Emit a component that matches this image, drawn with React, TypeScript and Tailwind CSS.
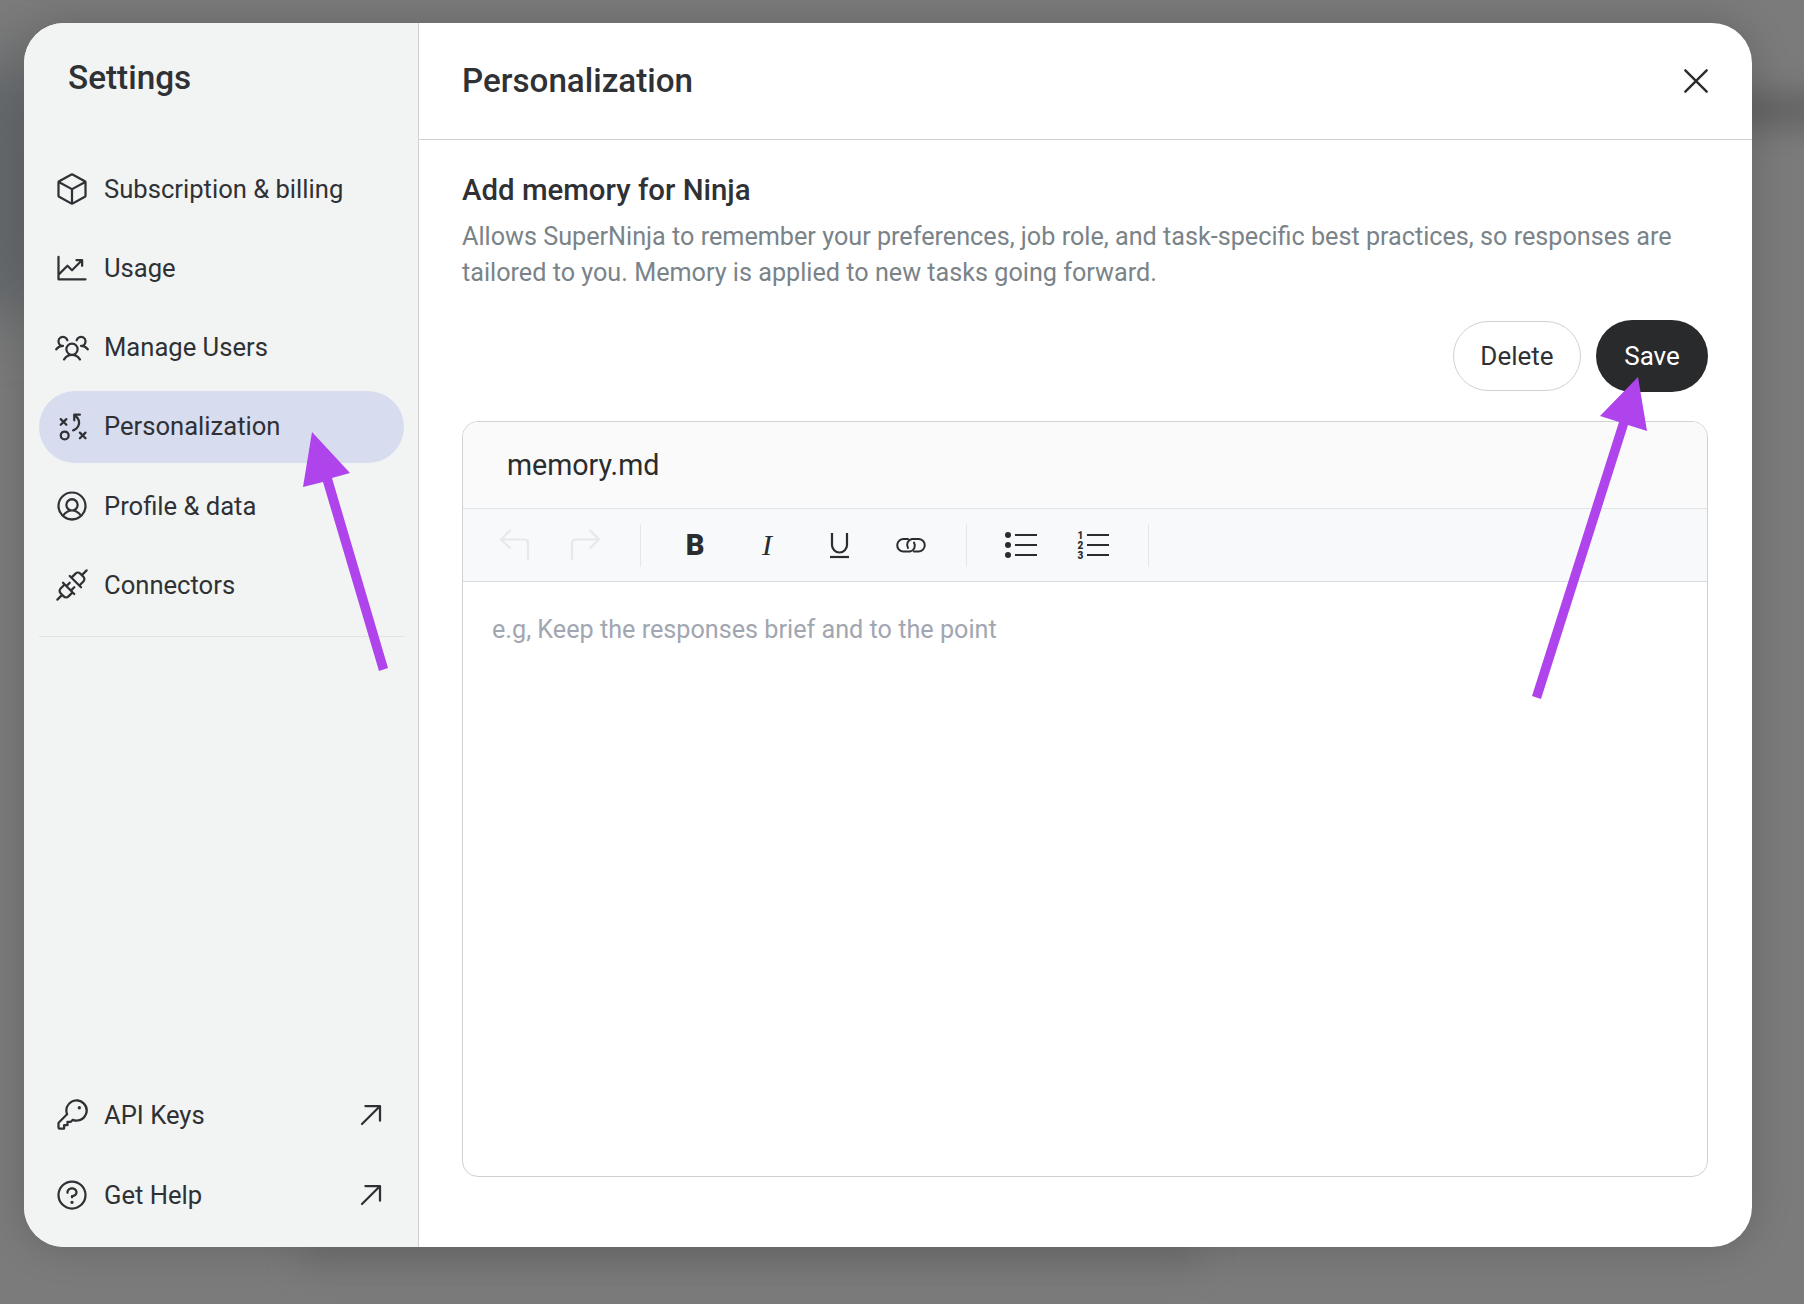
import React from "react";
import {
  PiCube, PiChartLineUp, PiUsersThree, PiStrategy, PiUserCircle, PiPlugs, PiKey, PiQuestion,
  PiArrowUpRight, PiX,
} from "react-icons/pi";

const nav = [
  { label: "Subscription & billing", Icon: PiCube },
  { label: "Usage", Icon: PiChartLineUp },
  { label: "Manage Users", Icon: PiUsersThree },
  { label: "Personalization", Icon: PiStrategy, active: true },
  { label: "Profile & data", Icon: PiUserCircle },
  { label: "Connectors", Icon: PiPlugs },
];

const Undo = ({ flip }: { flip?: boolean }) => (
  <svg width="32" height="32" viewBox="0 0 32 32" fill="none" stroke="#e6e8ea" strokeWidth="2.2" strokeLinecap="round" strokeLinejoin="round" className={flip ? "-scale-x-100" : ""}>
    <path d="M12 1.5 L3 10.5 L12 19" />
    <path d="M3 10.5 H26 Q30 10.5 30 14.5 V30" />
  </svg>
);

const Underline = () => (
  <svg width="32" height="32" viewBox="0 0 32 32" fill="none" stroke="#2b2c2e" strokeWidth="2.2">
    <path d="M9 4 V16 a7.5 7.5 0 0 0 15 0 V4" />
    <path d="M7 28 H26" />
  </svg>
);

const LinkIcon = () => (
  <svg width="32" height="32" viewBox="0 0 32 32" fill="none" stroke="#2b2c2e" strokeWidth="2" strokeLinecap="round">
    <path d="M13 10 H9 a6 6 0 0 0 -1 12.5 H15 a6 6 0 0 0 4 -9" />
    <path d="M19 22.5 H23 a6 6 0 0 0 1 -12.5 H17 a6 6 0 0 0 -4 9" />
  </svg>
);

const Bullets = () => (
  <svg width="32" height="32" viewBox="0 0 32 32" fill="#2b2c2e" stroke="none">
    <circle cx="3" cy="6" r="3" />
    <circle cx="3" cy="16" r="3" />
    <circle cx="3" cy="26" r="3" />
    <path d="M10 6 H32 M10 16 H32 M10 26 H32" stroke="#2b2c2e" strokeWidth="2" />
  </svg>
);

const Numbers = () => (
  <svg width="32" height="32" viewBox="0 0 32 32" fill="#2b2c2e">
    <text x="3.5" y="10" textAnchor="middle" fontSize="10" fontWeight="900" fontFamily="Roboto, sans-serif">1</text>
    <text x="3.5" y="20" textAnchor="middle" fontSize="10" fontWeight="900" fontFamily="Roboto, sans-serif">2</text>
    <text x="3.5" y="30" textAnchor="middle" fontSize="10" fontWeight="900" fontFamily="Roboto, sans-serif">3</text>
    <path d="M10 6 H32 M10 16 H32 M10 26 H32" stroke="#2b2c2e" strokeWidth="2" />
  </svg>
);

const TB = ({ children }: { children: React.ReactNode }) => (
  <button className="w-[72px] h-[44px] flex items-center justify-center text-[#2b2c2e]">{children}</button>
);

export default function App() {
  return (
    <div className="relative w-[1804px] h-[1304px] overflow-hidden bg-[#7b7b7b] pt-[23px] pl-[24px] font-['Roboto',sans-serif]">
      <div className="absolute left-[-40px] top-[60px] w-[80px] h-[260px] rounded-full bg-[#5f6468] blur-[30px]" />
      <div className="absolute right-[-30px] top-[95px] w-[120px] h-[30px] rounded-full bg-[#5e5e5e] blur-[16px]" />
      <div className="absolute left-[300px] top-[1240px] w-[900px] h-[24px] rounded-full bg-[#6c6c6c] blur-[16px]" />
      <div className="relative flex w-[1728px] h-[1224px] rounded-[40px] overflow-hidden bg-white shadow-[0_0_40px_rgba(0,0,0,0.18)]">
        <aside className="w-[395px] shrink-0 flex flex-col bg-[#f2f4f4] border-r border-[#cfd1d2] pl-[15px] pr-[14px] pb-[16px] text-[#2f3134]">
          <h2 className="text-[33.3px] leading-[40px] font-medium pl-[29px] pt-[35px] mb-[55px]">Settings</h2>
          <nav className="flex flex-col gap-[7.2px]">
            {nav.map(({ label, Icon, active }) => (
              <div key={label} className={`flex items-center h-[72px] pl-[15px] gap-[14px] rounded-full ${active ? "bg-[#d7dcee]" : ""}`}>
                <Icon size={36} />
                <span className="text-[25.6px]">{label}</span>
              </div>
            ))}
          </nav>
          <div className="h-px bg-[#e2e4e4] mt-[15px]" />
          <div className="mt-auto flex flex-col gap-[8px]">
            {[{ label: "API Keys", Icon: PiKey }, { label: "Get Help", Icon: PiQuestion }].map(({ label, Icon }) => (
              <div key={label} className="flex items-center h-[72px] pl-[15px] pr-[15px] gap-[14px]">
                <Icon size={36} />
                <span className="text-[25.6px] flex-1">{label}</span>
                <PiArrowUpRight size={36} />
              </div>
            ))}
          </div>
        </aside>
        <main className="flex-1 flex flex-col min-w-0">
          <header className="h-[117px] shrink-0 flex items-center justify-between pl-[43px] pr-[37px] border-b border-[#cfd1d2]">
            <h1 className="text-[33.2px] font-medium text-[#2f3134]">Personalization</h1>
            <PiX size={38} className="text-[#2b2c2e]" />
          </header>
          <div className="flex-1 flex flex-col pl-[43px] pr-[44px] pt-[32px] pb-[70px]">
            <h3 className="text-[29.4px] leading-[36px] font-medium text-[#2f3134]">Add memory for Ninja</h3>
            <p className="text-[25.2px] leading-[36px] text-[#7a8388] mt-[11px]">
              Allows SuperNinja to remember your preferences, job role, and task-specific best practices, so responses are tailored to you. Memory is applied to new tasks going forward.
            </p>
            <div className="flex justify-end items-center gap-[15px] mt-[29px]">
              <button className="h-[70px] w-[128px] rounded-full border border-[#cfd1d2] text-[26px] text-[#2f3134]">Delete</button>
              <button className="h-[72px] w-[112px] rounded-full bg-[#292a2c] text-[26px] text-white">Save</button>
            </div>
            <div className="flex-1 mt-[29px] flex flex-col rounded-[16px] border border-[#cfd1d2] overflow-hidden">
              <div className="h-[87px] shrink-0 flex items-center pl-[44px] pt-[1px] bg-[#fafafa] border-b border-[#e2e5e8] text-[28.6px] text-[#2b2c2e]">memory.md</div>
              <div className="h-[73px] shrink-0 flex items-center pl-[15px] bg-[#f8f9fb] border-b border-[#d9dbdd]">
                <TB><Undo /></TB>
                <TB><Undo flip /></TB>
                <div className="w-px h-[43px] bg-[#e4e6e8] mx-[18px]" />
                <TB><span className="text-[29px] font-black leading-none">B</span></TB>
                <TB><span className="text-[30px] italic leading-none font-['Liberation_Serif',serif]">I</span></TB>
                <TB><Underline /></TB>
                <TB><LinkIcon /></TB>
                <div className="w-px h-[43px] bg-[#e4e6e8] ml-[19px] mr-[18px]" />
                <TB><Bullets /></TB>
                <TB><Numbers /></TB>
                <div className="w-px h-[43px] bg-[#e4e6e8] mx-[19px]" />
              </div>
              <div className="flex-1 px-[29px] pt-[31px] text-[25.2px] leading-[34px] text-[#a1a6b0]">e.g, Keep the responses brief and to the point</div>
            </div>
          </div>
        </main>
      </div>
      <svg className="absolute inset-0 pointer-events-none" width="1804" height="1304" viewBox="0 0 1804 1304" fill="#b044ec">
        <polygon points="312,432 350,473 332,478 388,668 379,671 323,482 303,487" />
        <polygon points="1638,377 1647,431 1628,425 1541,699 1532,696 1619,422 1600,416" />
      </svg>
    </div>
  );
}
